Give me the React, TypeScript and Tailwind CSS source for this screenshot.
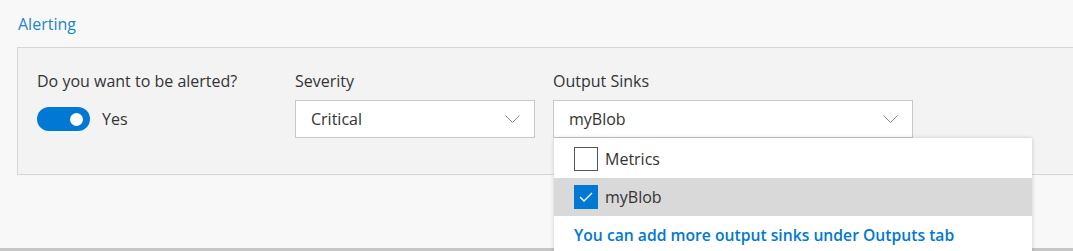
import { useState } from 'react'

const font = { fontFamily: '"Open Sans", "Noto Sans", sans-serif' }

function Chevron() {
  return (
    <svg width="15" height="8" viewBox="0 0 15 8" fill="none">
      <path d="M0.5 0.5L7.5 7.5L14.5 0.5" stroke="#8a8a8a" strokeWidth="1" />
    </svg>
  )
}

function Check({ checked }: { checked: boolean }) {
  if (!checked) {
    return <span className="w-[24px] h-[24px] border border-[#555] bg-white shrink-0" />
  }
  return (
    <span className="w-[24px] h-[24px] bg-[#0078d4] flex items-center justify-center shrink-0">
      <svg width="14" height="10" viewBox="0 0 14 10" fill="none">
        <path d="M1 5L5 9L13 1" stroke="white" strokeWidth="1.4" />
      </svg>
    </span>
  )
}

function App() {
  const [on] = useState(true)
  const sinks = [
    { name: 'Metrics', checked: false },
    { name: 'myBlob', checked: true },
  ]

  return (
    <div className="bg-[#f8f8f8] h-[251px] w-[1073px] overflow-hidden relative text-[16px] text-[#333]" style={font}>

      {/* Title */}
      <div className="pl-[18px] pt-[13px] h-[47px] text-[#1a86c8] leading-[22px]">Alerting</div>

      {/* Panel */}
      <div className="ml-[17px] mr-[-20px] h-[128px] bg-[#f3f3f3] border border-[#d6d6d6] pl-[19px] pt-[22px]">
        <div className="flex gap-[18px]">

          <div className="w-[240px]">
            <div className="leading-[22px] mb-[8px]">Do you want to be alerted?</div>
            <div className="h-[38px] flex items-center gap-[12px]">
              <span className="w-[53px] h-[24px] rounded-full bg-[#0078d4] flex items-center justify-end pr-[7px]">
                <span className={on ? 'w-[13px] h-[13px] rounded-full bg-white' : ''} />
              </span>
              <span>Yes</span>
            </div>
          </div>

          <div className="w-[240px]">
            <div className="leading-[22px] mb-[8px]">Severity</div>
            <div className="h-[38px] bg-white border border-[#c8c8c8] flex items-center justify-between pl-[15px] pr-[14px]">
              <span>Critical</span>
              <Chevron />
            </div>
          </div>

          <div className="w-[360px] relative">
            <div className="leading-[22px] mb-[8px]">Output Sinks</div>
            <div className="h-[38px] bg-white border border-[#c8c8c8] flex items-center justify-between pl-[15px] pr-[14px]">
              <span>myBlob</span>
              <Chevron />
            </div>

            {/* Dropdown */}
            <div className="absolute left-[1px] top-[68px] w-[478px] bg-white pt-[2px] pb-[4px] z-10 shadow-[0_0_4px_rgba(0,0,0,0.18)]">
              {sinks.map((s) => (
                <div
                  key={s.name}
                  className={`h-[38px] flex items-center gap-[7px] pl-[20px] ${s.checked ? 'bg-[#d9d9d9]' : ''}`}
                >
                  <Check checked={s.checked} />
                  <span>{s.name}</span>
                </div>
              ))}
              <div className="h-[40px] flex items-center pl-[20px] text-[#0078d4] font-semibold text-[15.7px]">
                You can add more output sinks under Outputs tab
              </div>
            </div>
          </div>

        </div>
      </div>

      {/* bottom edge */}
      <div className="absolute left-0 right-0 bottom-0 h-[3px] bg-[#c6c6c6]" />
    </div>
  )
}

export default App
